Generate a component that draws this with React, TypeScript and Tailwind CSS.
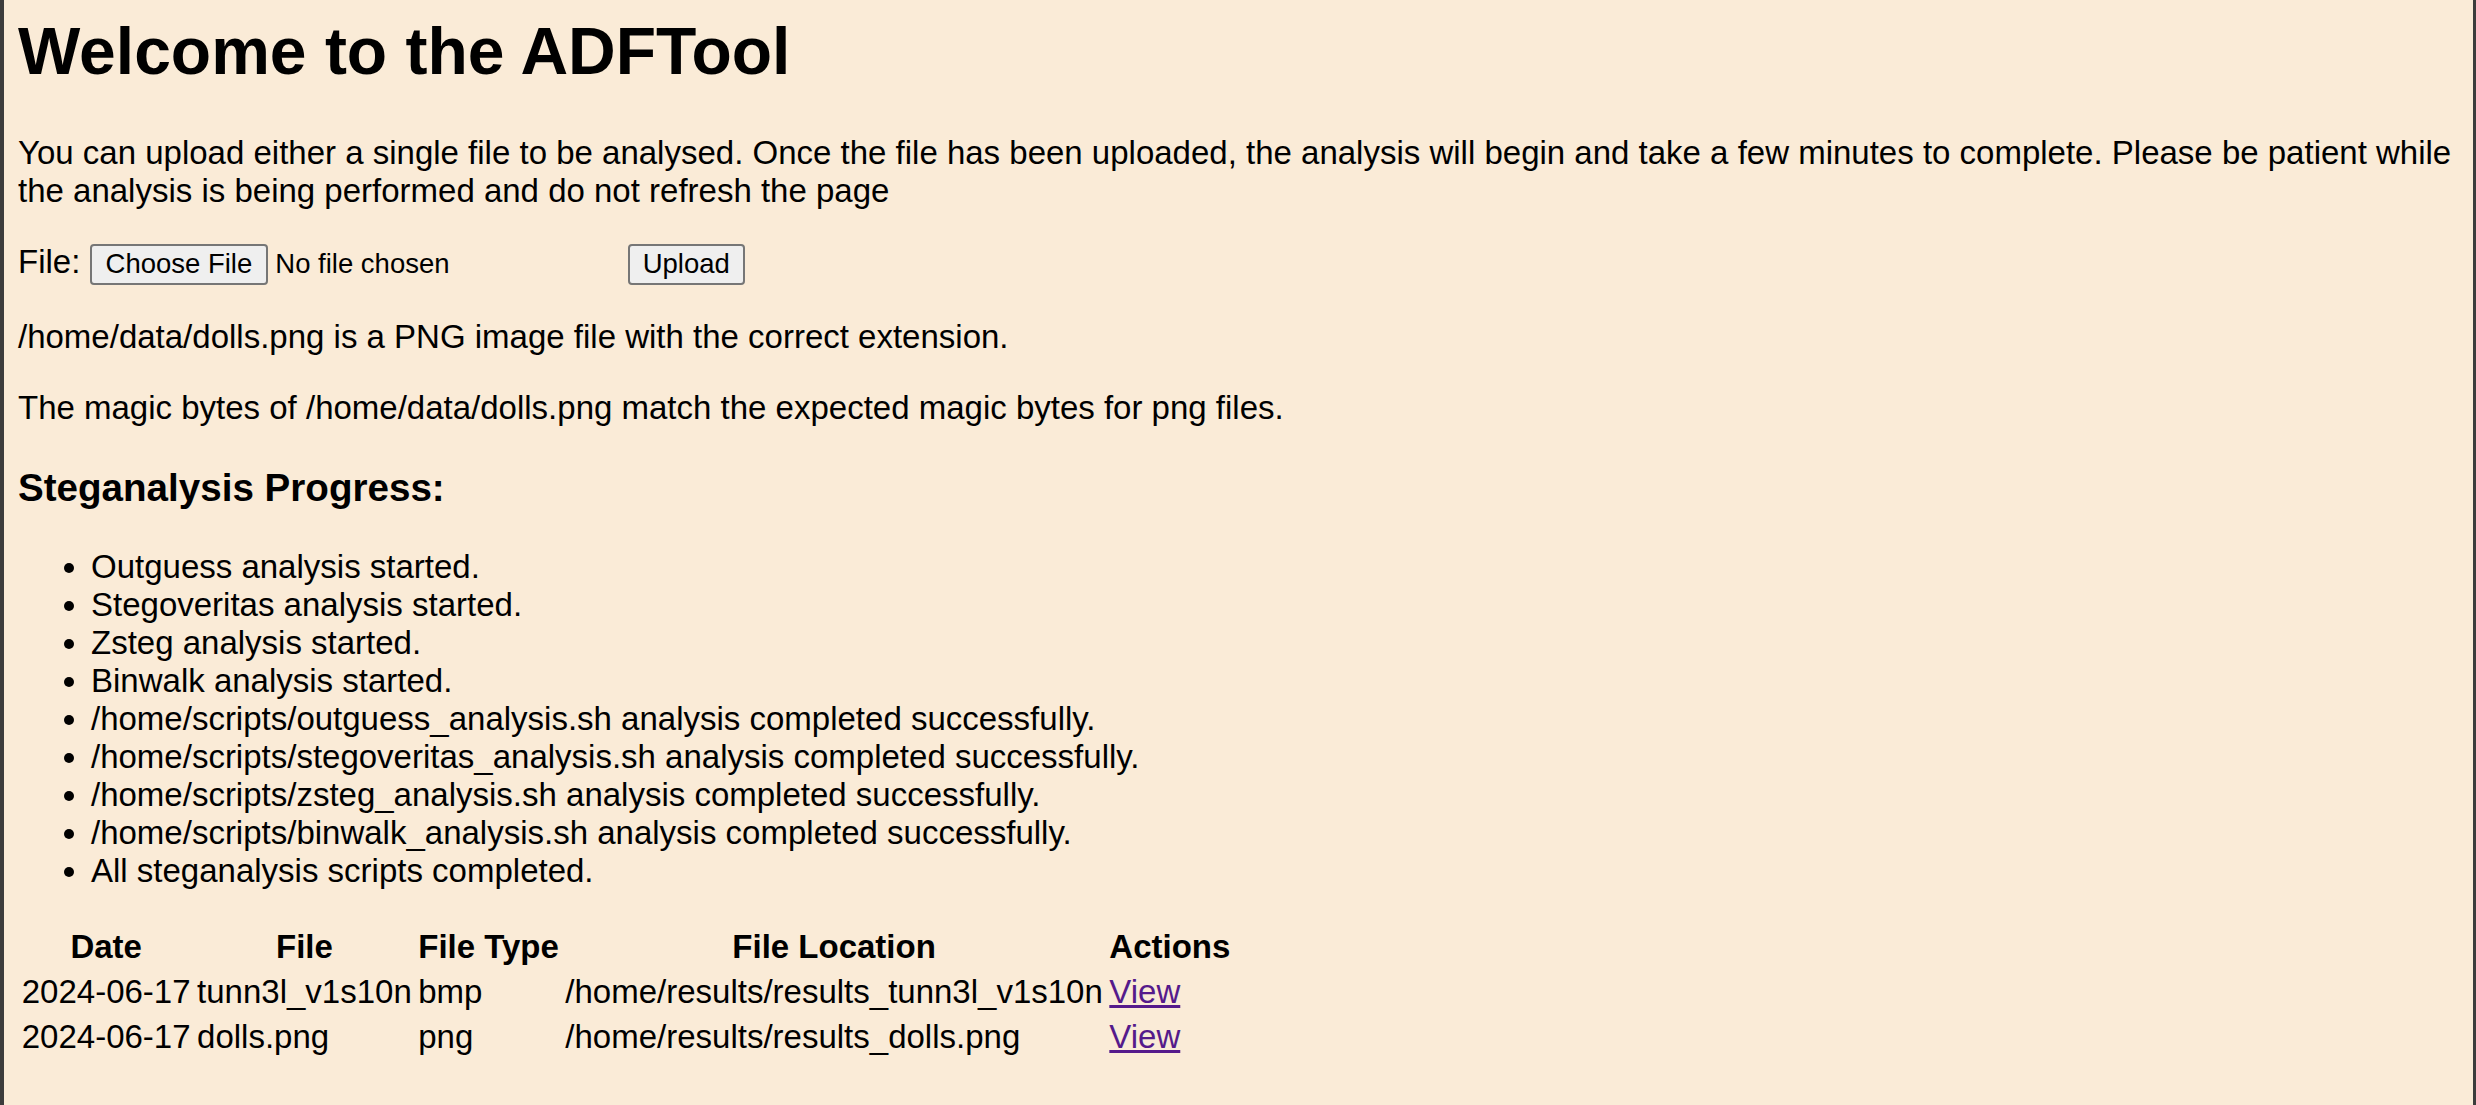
import React from 'react';

const progress: string[] = [
  'Outguess analysis started.',
  'Stegoveritas analysis started.',
  'Zsteg analysis started.',
  'Binwalk analysis started.',
  '/home/scripts/outguess_analysis.sh analysis completed successfully.',
  '/home/scripts/stegoveritas_analysis.sh analysis completed successfully.',
  '/home/scripts/zsteg_analysis.sh analysis completed successfully.',
  '/home/scripts/binwalk_analysis.sh analysis completed successfully.',
  'All steganalysis scripts completed.',
];

const results = [
  { date: '2024-06-17', file: 'tunn3l_v1s10n', type: 'bmp', location: '/home/results/results_tunn3l_v1s10n' },
  { date: '2024-06-17', file: 'dolls.png', type: 'png', location: '/home/results/results_dolls.png' },
];

// native-looking grey button
const btn = 'inline-block bg-[#efefef] border-2 border-[#767676] rounded-[4px] py-[2.5px] text-[27.5px] leading-[normal]';

const App: React.FC = () => {
  return (
    <div className="min-h-screen bg-[#faebd7] border-l-4 border-r-[3px] border-[#3c3c3c] pl-[14px] pr-[17px] pt-px pb-8 text-black text-[33px] leading-[normal] font-['Liberation_Sans',Arial,sans-serif]">
      <h1 className="text-[66px] font-bold leading-[normal] mt-[12px] mb-[45px]">Welcome to the ADFTool</h1>

      <p className="my-[33px]">
        You can upload either a single file to be analysed. Once the file has been uploaded, the analysis will begin and take a few minutes to complete. Please be patient while the analysis is being performed and do not refresh the page
      </p>

      <form className="my-[33px]" onSubmit={(e) => e.preventDefault()}>
        File:{' '}
        <span className="inline-block w-[529px] whitespace-nowrap">
          <span className={`${btn} px-[14px]`}>Choose File</span>
          <span className="ml-[7px] text-[27.5px]">No file chosen</span>
        </span>{' '}
        <button type="submit" className={`${btn} px-[13px]`}>Upload</button>
      </form>

      <p className="my-[33px]">/home/data/dolls.png is a PNG image file with the correct extension.</p>
      <p className="my-[33px]">The magic bytes of /home/data/dolls.png match the expected magic bytes for png files.</p>

      <h3 className="text-[38.6px] font-bold leading-[normal] mt-[39.6px] mb-[37.6px]">Steganalysis Progress:</h3>

      <ul className="list-disc pl-[73px] my-[33px]">
        {progress.map((item) => (
          <li key={item}>{item}</li>
        ))}
      </ul>

      <table className="border-separate border-spacing-x-[3px] border-spacing-y-[3px] text-[33px] -ml-[1px]">
        <thead>
          <tr>
            <th className="px-[1.75px] py-[2px] font-bold text-center">Date</th>
            <th className="px-[1.75px] py-[2px] font-bold text-center">File</th>
            <th className="px-[1.75px] py-[2px] font-bold text-center">File Type</th>
            <th className="px-[1.75px] py-[2px] font-bold text-center">File Location</th>
            <th className="px-[1.75px] py-[2px] font-bold text-center">Actions</th>
          </tr>
        </thead>
        <tbody>
          {results.map((r) => (
            <tr key={r.file}>
              <td className="px-[1.75px] py-[2px]">{r.date}</td>
              <td className="px-[1.75px] py-[2px]">{r.file}</td>
              <td className="px-[1.75px] py-[2px]">{r.type}</td>
              <td className="px-[1.75px] py-[2px]">{r.location}</td>
              <td className="px-[1.75px] py-[2px]">
                <a href="#" className="text-[#551a8b] underline">View</a>
              </td>
            </tr>
          ))}
        </tbody>
      </table>
    </div>
  );
};

export default App;
